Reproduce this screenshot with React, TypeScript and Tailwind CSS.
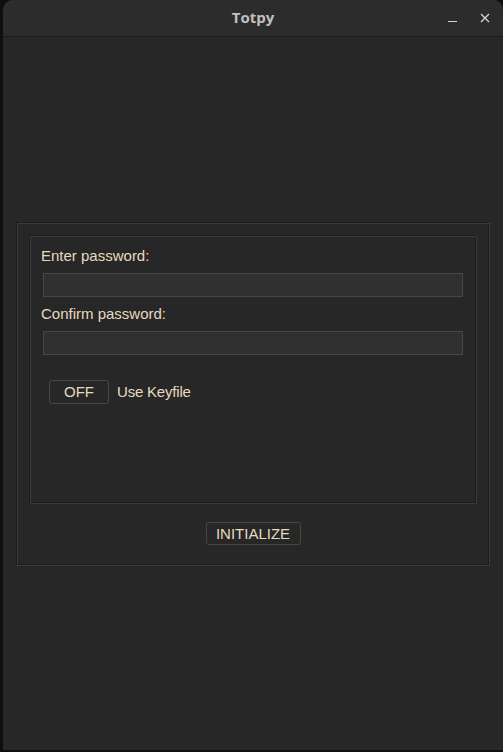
import React from "react";

const sans = { fontFamily: '"Liberation Sans", Arial, sans-serif' };

export default function App() {
  return (
    <div className="w-[503px] h-[752px] bg-[#0f0f0f] pl-[3px] overflow-hidden">
      <div className="w-[500px] h-[750px] rounded-t-[10px] overflow-hidden bg-[#272727] flex flex-col">
        {/* Title bar */}
        <div className="relative h-[37px] shrink-0 bg-[#2c2c2c] border-b border-[#1c1c1c] flex items-center justify-center">
          <span
            className="text-[15px] font-bold text-[#c0c0c0] leading-none -mt-[2px]"
            style={{ fontFamily: '"Open Sans", "Noto Sans", sans-serif' }}
          >
            Totpy
          </span>
          <div className="absolute left-[445px] top-[21px] w-[9px] h-[1px] bg-[#d6d6d6]" />
          <svg className="absolute left-[477px] top-[13px]" width="10" height="10" viewBox="0 0 10 10">
            <path d="M1 1L9 9M9 1L1 9" stroke="#d6d6d6" strokeWidth="1.3" />
          </svg>
        </div>

        {/* Body */}
        <div className="flex-1 flex items-center px-[13px]" style={sans}>
          <div className="w-full flex flex-col items-center border border-t-[#1c1c1c] border-l-[#1c1c1c] border-b-[#3a3a3a] border-r-[#3a3a3a] shadow-[inset_1px_1px_0_#3a3a3a,inset_-1px_-1px_0_#1c1c1c] pt-[12px] px-[12px] pb-[20px]">
            <div className="w-full h-[269px] border border-t-[#1c1c1c] border-l-[#1c1c1c] border-b-[#3a3a3a] border-r-[#3a3a3a] shadow-[inset_1px_1px_0_#3a3a3a,inset_-1px_-1px_0_#1c1c1c] px-[11px] pt-[11px]">
              <div className="text-[15px] leading-[17px] text-[#e6dabf]">Enter password:</div>
              <div className="mt-[9px] mx-[2px] h-[24px] bg-[#303030] border border-[#4b4641]" />
              <div className="mt-[8px] text-[15px] leading-[17px] text-[#e6dabf]">Confirm password:</div>
              <div className="mt-[9px] mx-[2px] h-[24px] bg-[#303030] border border-[#4b4641]" />
              <div className="mt-[25px] ml-[8px] flex items-center gap-[8px]">
                <div className="w-[60px] h-[24px] pt-[1px] rounded-[3px] border border-[#4b4641] flex items-center justify-center text-[15px] text-[#e6dabf]">
                  OFF
                </div>
                <span className="pt-[1px] text-[15px] tracking-[-0.2px] text-[#e6dabf]">Use Keyfile</span>
              </div>
            </div>
            <div className="mt-[18px] w-[95px] h-[23px] pt-[2px] rounded-[3px] border border-[#4b4641] flex items-center justify-center text-[15px] text-[#e6dabf]">
              INITIALIZE
            </div>
          </div>
        </div>
      </div>
    </div>
  );
}
